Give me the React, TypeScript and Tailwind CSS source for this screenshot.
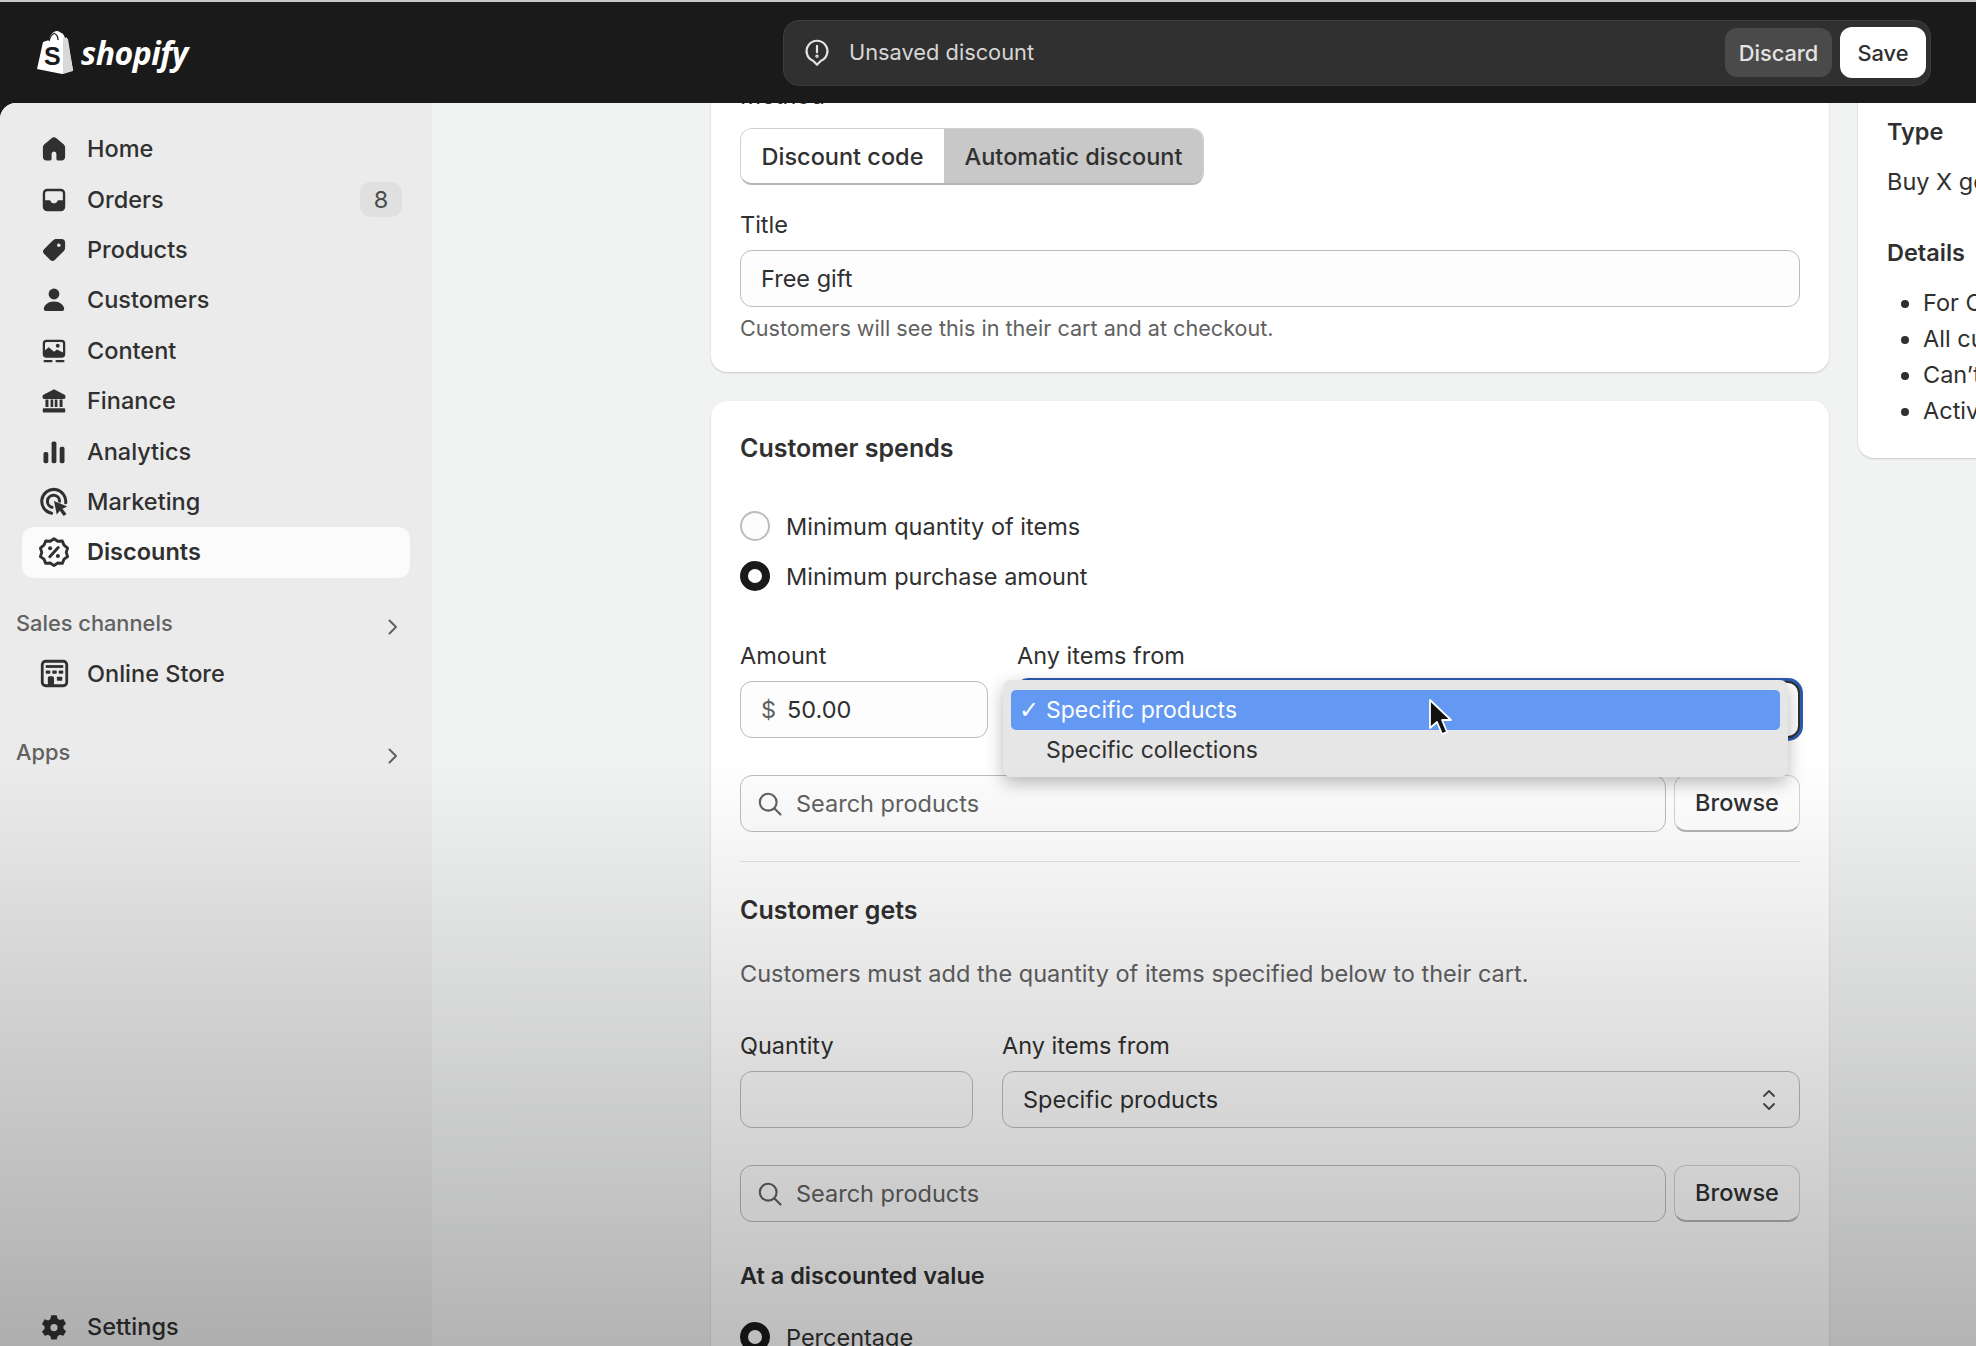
import React from "react";

const I = ({ children, size = 30 }: { children: React.ReactNode; size?: number }) => (
  <svg width={size} height={size} viewBox="0 0 20 20" fill="#303030" className="shrink-0">{children}</svg>
);

const icons: Record<string, React.ReactNode> = {
  Home: <I><path d="M10 2.200c-.6 0-1.100.2-1.600.6L3.600 6.900C3 7.500 2.600 8.200 2.600 9v6.400c0 1.300 1 2.300 2.300 2.300h2.300c.7 0 1.200-.5 1.200-1.200v-3.200c0-.9.7-1.600 1.600-1.600s1.600.7 1.600 1.600v3.200c0 .7.5 1.200 1.200 1.200h2.300c1.300 0 2.300-1 2.300-2.300V9c0-.8-.4-1.500-1-2.100l-4.800-4.100c-.5-.4-1-.6-1.600-.6z" /></I>,
  Orders: <I><path fillRule="evenodd" d="M5.500 2.500h9a3 3 0 0 1 3 3v9a3 3 0 0 1-3 3h-9a3 3 0 0 1-3-3v-9a3 3 0 0 1 3-3zm0 1.600A1.400 1.400 0 0 0 4.100 5.500v4.700h2.600c.6 0 1 .3 1.200.8.3.7.9 1.200 2.100 1.200s1.800-.5 2.100-1.200c.2-.5.6-.8 1.200-.8h2.600V5.500a1.400 1.400 0 0 0-1.400-1.400z" /></I>,
  Products: <I><path fillRule="evenodd" d="M11.500 2.600h3.400a2.500 2.500 0 0 1 2.500 2.500v3.400c0 .9-.4 1.700-1 2.300l-5.700 5.700a2.400 2.400 0 0 1-3.400 0L3.500 12.700a2.400 2.400 0 0 1 0-3.400l5.700-5.700c.6-.6 1.400-1 2.300-1zm1.700 3a1.200 1.200 0 1 0 0 2.400 1.200 1.200 0 0 0 0-2.400z" /></I>,
  Customers: <I><circle cx="10" cy="6" r="3.600" /><path d="M10 11c-3.800 0-6.500 2.300-6.800 4.800-.1.800.5 1.500 1.300 1.500h11c.8 0 1.400-.7 1.300-1.500C16.500 13.300 13.800 11 10 11z" /></I>,
  Content: <I><path fillRule="evenodd" d="M5 2.500h10A2.500 2.500 0 0 1 17.500 5v7a2.500 2.500 0 0 1-2.500 2.500H5A2.500 2.500 0 0 1 2.500 12V5A2.500 2.500 0 0 1 5 2.500zm0 1.500a1 1 0 0 0-1 1v4.500l2.500-2 3.500 3 2-1.500 4 2V5a1 1 0 0 0-1-1zm7.500 1.200a1.300 1.300 0 1 0 0 2.600 1.300 1.300 0 0 0 0-2.600z" /><rect x="3" y="16" width="6" height="1.500" rx=".7" /><rect x="11" y="16" width="6" height="1.500" rx=".7" /></I>,
  Finance: <I><path d="M10 2.200 3 5.800c-.4.2-.6.5-.6.900v1c0 .5.4.9.9.9h13.400c.5 0 .9-.4.900-.9v-1c0-.4-.2-.7-.6-.9z" /><rect x="4.300" y="9" width="2" height="5" /><rect x="7.700" y="9" width="1.800" height="5" /><rect x="10.500" y="9" width="1.800" height="5" /><rect x="13.700" y="9" width="2" height="5" /><rect x="2.500" y="14.800" width="15" height="2.800" rx=".8" /></I>,
  Analytics: <I><rect x="3" y="10" width="3.200" height="7.500" rx="1.200" /><rect x="8.400" y="3" width="3.200" height="14.500" rx="1.200" /><rect x="13.800" y="6.500" width="3.200" height="11" rx="1.200" /></I>,
  Marketing: <I size={32}><g fill="none" stroke="#303030" strokeWidth="1.900" strokeLinecap="round"><path d="M8.500 17A7.500 7.500 0 1 1 17.300 10.500" /><path d="M8.800 13.300A3.800 3.800 0 1 1 13.500 9.500" /></g><path d="M10 9.300 18.300 12.800 15.300 14.200 17.800 17.500 16 18.800 13.700 15.400 11.700 17.800z" /></I>,
  Discounts: <I size={34}><g fill="none" stroke="#303030" strokeWidth="1.700" strokeLinejoin="round" strokeLinecap="round"><path d="M10 2.200 12.200 3.700 14.900 3.500 15.900 6 18 7.700 17.200 10.200 18 12.700 15.900 14.200 14.900 16.700 12.200 16.500 10 18 7.800 16.500 5.100 16.700 4.100 14.200 2 12.700 2.800 10.200 2 7.700 4.100 6 5.100 3.500 7.800 3.700z" /><path d="M7.500 12.800 12.500 7.400" /></g><circle cx="7.700" cy="7.800" r="1.200" /><circle cx="12.300" cy="12.400" r="1.200" /></I>,
  OnlineStore: <I size={35}><path fillRule="evenodd" d="M5 2.200h10A2.800 2.800 0 0 1 17.800 5v10a2.800 2.800 0 0 1-2.800 2.800H5A2.800 2.800 0 0 1 2.200 15V5A2.800 2.800 0 0 1 5 2.200zm0 1.600A1.200 1.200 0 0 0 3.800 5v10A1.200 1.200 0 0 0 5 16.200h1.200V12.500c0-.6.400-1 1-1h1.500c.6 0 1 .4 1 1v3.700H15a1.200 1.200 0 0 0 1.200-1.200V5A1.200 1.200 0 0 0 15 3.800z" /><path d="M5 5.200h10v1.600H5z" /><rect x="5" y="8.300" width="2.600" height="1.800" rx=".5" /><rect x="8.700" y="8.300" width="2.600" height="1.800" rx=".5" /><rect x="12.400" y="8.300" width="2.600" height="1.800" rx=".5" /><rect x="11.400" y="11.800" width="3" height="2.400" rx=".4" /></I>,
  Settings: <I><path fillRule="evenodd" d="M8.200 2.200h3.600l.6 2.300 1.500.9 2.300-.7 1.800 3.100-1.700 1.600v1.800l1.700 1.600-1.800 3.100-2.300-.7-1.500.9-.6 2.300H8.200l-.6-2.300-1.500-.9-2.300.7L2 13l1.700-1.600V9.600L2 8l1.800-3.100 2.300.7 1.500-.9zM10 8a2.400 2.400 0 1 0 0 4.800A2.400 2.400 0 0 0 10 8z" /></I>,
};

const Chevron = () => (
  <svg width="14" height="18" viewBox="0 0 14 18" fill="none" stroke="#616161" strokeWidth="2" strokeLinecap="round" strokeLinejoin="round"><path d="M3.500 2.500 10 9l-6.500 6.500" /></svg>
);

const NavItem = ({ icon, label, badge, active }: { icon: string; label: string; badge?: string; active?: boolean }) => (
  <div className={`flex h-[50.4px] items-center rounded-[12px] pl-[19px] pr-[8px] ${active ? "bg-[#fbfbfb]" : ""}`}>
    <span className="flex w-[26px] items-center justify-center">{icons[icon]}</span>
    <span className={`ml-[20px] text-[#303030] ${active ? "font-semibold" : "font-medium"}`}>{label}</span>
    {badge && <span className="ml-auto flex h-[35px] w-[42px] items-center justify-center rounded-[11px] bg-[#e0e0e0] text-[#4a4a4a]">{badge}</span>}
  </div>
);

const SectionRow = ({ label }: { label: string }) => (
  <div className="flex h-[30px] items-center justify-between pl-[16px] pr-[32px] text-[21.8px] font-medium text-[#616161]">
    <span className="-mt-[1px]">{label}</span>
    <span className="mt-[6px]"><Chevron /></span>
  </div>
);

const Search = () => (
  <svg width="30" height="30" viewBox="0 0 20 20" fill="none" stroke="#616161" strokeWidth="1.400" strokeLinecap="round"><circle cx="8.800" cy="8.800" r="5.600" /><path d="m13 13 4 4" /></svg>
);

const Field = ({ className = "px-[20px]", children }: { className?: string; children?: React.ReactNode }) => (
  <div className={`flex h-[57px] items-center rounded-[12px] border border-[#bcbcbc] bg-[#fdfdfd] ${className}`}>{children}</div>
);

const SearchRow = ({ className = "" }: { className?: string }) => (
  <div className={`flex gap-[8px] ${className}`}>
    <Field className="min-w-0 flex-1 gap-[11px] px-[14px] text-[#616161]">
      <Search />
      <span>Search products</span>
    </Field>
    <div className="flex h-[57px] w-[126px] items-center justify-center rounded-[12px] border border-[#d4d4d4] border-b-[2px] border-b-[#b5b5b5] bg-white font-medium text-[#303030]">Browse</div>
  </div>
);

const Radio = ({ checked, label }: { checked?: boolean; label: string }) => (
  <div className="flex h-[50px] items-center gap-[16px]">
    {checked ? (
      <span className="h-[30px] w-[30px] shrink-0 rounded-full border-[8px] border-[#1a1a1a] bg-white" />
    ) : (
      <span className="h-[30px] w-[30px] shrink-0 rounded-full border-[2px] border-[#bcbcbc] bg-[#fdfdfd]" />
    )}
    <span className="mt-[1px] text-[#303030]">{label}</span>
  </div>
);

const Heading = ({ className = "", children }: { className?: string; children: React.ReactNode }) => (
  <div className={`h-[30px] font-semibold leading-[32px] text-[#303030] ${className}`}>{children}</div>
);

const Label = ({ className = "", children }: { className?: string; children: React.ReactNode }) => (
  <div className={`h-[30px] leading-[32px] text-[#303030] ${className}`}>{children}</div>
);

export default function App() {
  return (
    <div className="relative flex h-[1346px] w-[1976px] flex-col overflow-hidden bg-[#1a1a1a] font-['Inter',sans-serif] text-[23.5px] leading-[30px]">
      <header className="flex h-[103px] shrink-0 items-center border-t-[2px] border-[#c8c8c8] bg-[#1a1a1a]">
        <div className="ml-[35px] flex w-[748px] items-center gap-[6px]">
          <svg width="40" height="44" viewBox="0 0 38 44">
            <path d="M1 38 7 11c2-1 4-1 6-2 1-5 4-9 8-9 2 0 3 1 4 2 2 0 3 2 4 5l2-.5L37 39l-11 4z" fill="#fff" />
            <path d="M27 7v36l10-3L32 8z" fill="#d8d8d8" />
            <path d="M13 10c1-4 3-7 6-8 M22 9c0-3-1-5-3-6" stroke="#1a1a1a" strokeWidth="1.300" fill="none" />
            <text x="8" y="34" fontFamily="'Liberation Sans',sans-serif" fontWeight="700" fontSize="25" fill="#1a1a1a">S</text>
          </svg>
          <span className="font-['Open_Sans',sans-serif] text-[32px] font-bold italic leading-none tracking-[-0.5px] text-white">shopify</span>
        </div>
        <div className="flex h-[66px] w-[1148px] items-center rounded-[16px] border border-[#3d3d3d] bg-[#303030] pl-[20px] pr-[4px] text-[21.8px]">
          <svg width="26" height="30" viewBox="0 0 20 23" fill="none" stroke="#e3e3e3" strokeWidth="1.700"><path d="M10 20.500 7 17.500A8 8 0 1 1 13 17.500z" strokeLinejoin="round" /><path d="M10 6v5" strokeLinecap="round" /><circle cx="10" cy="14" r=".5" /></svg>
          <span className="-mt-[2px] ml-[19px] text-[#d6d6d6]">Unsaved discount</span>
          <div className="ml-auto flex h-[49px] w-[107px] items-center justify-center rounded-[12px] bg-[#4a4a4a] font-medium text-[#e3e3e3]">Discard</div>
          <div className="ml-[8px] flex h-[51px] w-[86px] items-center justify-center rounded-[12px] bg-white font-medium text-[#303030]">Save</div>
        </div>
      </header>

      <div className="flex min-h-0 flex-1 overflow-hidden rounded-tl-[16px] bg-[#f1f2f2]">
        <aside className="flex w-[432px] shrink-0 flex-col bg-[#ebebeb] pt-[21px]">
          <nav className="pl-[22px] pr-[22px]">
            <NavItem icon="Home" label="Home" />
            <NavItem icon="Orders" label="Orders" badge="8" />
            <NavItem icon="Products" label="Products" />
            <NavItem icon="Customers" label="Customers" />
            <NavItem icon="Content" label="Content" />
            <NavItem icon="Finance" label="Finance" />
            <NavItem icon="Analytics" label="Analytics" />
            <NavItem icon="Marketing" label="Marketing" />
            <NavItem icon="Discounts" label="Discounts" active />
          </nav>
          <div className="mt-[31px]"><SectionRow label="Sales channels" /></div>
          <div className="mt-[10px] pl-[22px] pr-[22px]"><NavItem icon="OnlineStore" label="Online Store" /></div>
          <div className="mt-[39px]"><SectionRow label="Apps" /></div>
          <div className="mt-auto flex h-[38px] items-center pl-[41px]">
            <span className="flex w-[26px] justify-center">{icons.Settings}</span>
            <span className="ml-[20px] font-medium text-[#303030]">Settings</span>
          </div>
        </aside>

        <main className="flex min-w-0 flex-1 gap-[29px] overflow-hidden pl-[279px]">
          <div className="-mt-[60px] flex w-[1118px] shrink-0 flex-col gap-[29px]">
            <section className="rounded-[16px] bg-white px-[29px] pb-[28px] pt-[37px] shadow-[0_1px_2px_rgba(0,0,0,0.18)]">
              <Label>Method</Label>
              <div className="mt-[18px] flex h-[57px] w-[464px] overflow-hidden rounded-[12px] border border-[#d0d0d0] border-b-[2px] border-b-[#b5b5b5] font-medium text-[#303030]">
                <div className="flex w-[203px] items-center justify-center bg-white pt-[1px]">Discount code</div>
                <div className="flex flex-1 items-center justify-center bg-[#c8c8c8] pt-[1px]">Automatic discount</div>
              </div>
              <Label className="mt-[24px]">Title</Label>
              <Field className="mt-[11px] px-[20px] text-[#303030]">Free gift</Field>
              <div className="mt-[7px] h-[30px] text-[21.6px] leading-[28px] text-[#616161]">Customers will see this in their cart and at checkout.</div>
            </section>

            <section className="flex-1 rounded-t-[16px] bg-white px-[29px] pt-[31px] shadow-[0_1px_2px_rgba(0,0,0,0.18)]">
              <Heading className="text-[25px]">Customer spends</Heading>
              <div className="mt-[39px]">
                <Radio label="Minimum quantity of items" />
                <Radio checked label="Minimum purchase amount" />
              </div>
              <div className="mt-[39px] flex gap-[29px]">
                <div className="w-[248px]">
                  <Label>Amount</Label>
                  <Field className="mt-[11px] gap-[11px] px-[20px] text-[#303030]"><span className="text-[#616161]">$</span><span>50.00</span></Field>
                </div>
                <div className="flex-1">
                  <Label>Any items from</Label>
                  <div className="relative mt-[11px] h-[57px] rounded-[12px] border-[2px] border-[#303030] bg-white shadow-[0_0_0_3px_#2a5bb0]">
                    <div className="absolute -left-[16px] -top-[3px] h-[97px] w-[785px] rounded-[8px] bg-[#e6e6e6] px-[8px] pt-[10px] text-[23px] shadow-[0_6px_18px_rgba(0,0,0,0.28)]">
                      <div className="flex h-[40px] items-center rounded-[5px] bg-[#6398f3] pl-[8px] text-white">
                        <span className="w-[27px] font-['DejaVu_Sans',sans-serif] text-[24px]">✓</span>
                        <span>Specific products</span>
                      </div>
                      <div className="flex h-[40px] items-center pl-[35px] text-[#303030]">Specific collections</div>
                      <svg className="absolute left-[425px] top-[18px]" width="26" height="38" viewBox="0 0 26 38">
                        <path d="M2 2v28l7-6 5 12 5-2-5-12h9z" fill="#111" stroke="#fff" strokeWidth="1.800" strokeLinejoin="round" />
                      </svg>
                    </div>
                  </div>
                </div>
              </div>
              <SearchRow className="mt-[37px]" />
              <div className="mt-[29px] h-px bg-[#e3e3e3]" />
              <Heading className="mt-[32px] text-[25px]">Customer gets</Heading>
              <div className="mt-[34px] h-[30px] leading-[32px] text-[#616161]">Customers must add the quantity of items specified below to their cart.</div>
              <div className="mt-[42px] flex gap-[29px]">
                <div className="w-[233px]">
                  <Label>Quantity</Label>
                  <Field className="mt-[11px] px-[20px]" />
                </div>
                <div className="flex-1">
                  <Label>Any items from</Label>
                  <Field className="mt-[11px] justify-between px-[20px] text-[#303030]">
                    <span>Specific products</span>
                    <svg width="20" height="28" viewBox="0 0 20 28" fill="none" stroke="#4a4a4a" strokeWidth="1.800" strokeLinecap="round" strokeLinejoin="round"><path d="m5 10 5-5 5 5M5 18l5 5 5-5" /></svg>
                  </Field>
                </div>
              </div>
              <SearchRow className="mt-[37px]" />
              <Heading className="mt-[38px]">At a discounted value</Heading>
              <div className="mt-[22px]"><Radio checked label="Percentage" /></div>
            </section>
          </div>

          <div className="-mt-[20px] h-[375px] w-[300px] shrink-0 rounded-[16px] bg-white pl-[29px] pt-[33px] shadow-[0_1px_2px_rgba(0,0,0,0.18)]">
            <Heading>Type</Heading>
            <div className="mt-[21px] whitespace-nowrap text-[#303030]">Buy X get Y</div>
            <Heading className="mt-[40px]">Details</Heading>
            <ul className="mt-[21px] list-disc whitespace-nowrap pl-[36px] text-[#303030] marker:text-[#303030]">
              <li className="h-[36px]">For Online Store</li>
              <li className="h-[36px]">All customers</li>
              <li className="h-[36px]">Can’t combine with other discounts</li>
              <li className="h-[36px]">Active from today</li>
            </ul>
          </div>
        </main>
      </div>

      <div className="pointer-events-none absolute inset-x-0 bottom-0 h-[586px] bg-gradient-to-b from-[rgba(0,0,0,0)] to-[rgba(0,0,0,0.26)]" />
    </div>
  );
}
